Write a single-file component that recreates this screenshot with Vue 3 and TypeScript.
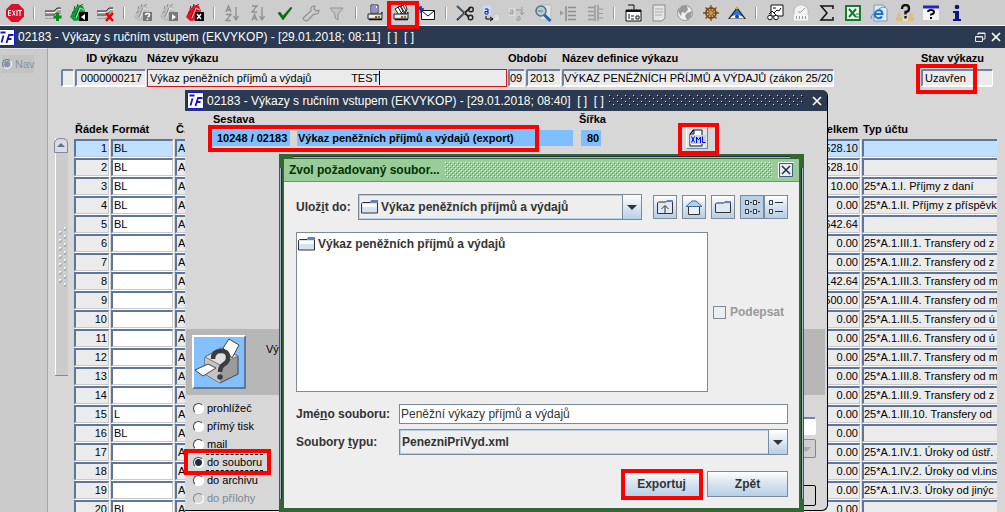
<script setup lang="ts">
import { ref } from 'vue'

interface Tool { name: string; art: string }
interface Row { no: number; format: string; total: string; kind: string }

const sheet = '<path d="M1 7h9l3-3h4v6l-3 1-4 4H1z" fill="#a3a3a3"/><path d="M1 7h9l3-3h4" fill="none" stroke="#333"/><path d="M2 8.500h9l3-3h3M1 13h8l3-2" fill="none" stroke="#f4f4f4"/><path d="M1 11h9l4-3" fill="none" stroke="#555"/>'
const file = (c: string, d: string) => `<path d="M0 13L4 5l5-4 4 1 2 5-2 9-9 1z" fill="${c}"/><path d="M4 5l1-3M7 3l1-3M10 2l3-2M2 9l3-2M5 13l4-9" fill="none" stroke="${d}"/><path d="M6 14l4-10 4 2" fill="none" stroke="#f2f2f2" stroke-width=".8"/>`
const printer = '<path d="M2 10h13l1-2v7H2z" fill="#ddd" stroke="#222"/><path d="M3 12h8" stroke="#fff"/><path d="M3 15.500h13" stroke="#111" stroke-width="1.500"/><path d="M9 13h2" stroke="#e22" stroke-width="2"/><path d="M12 13h2" stroke="#2a2" stroke-width="2"/>'

const groups: Tool[][] = [
  [{ name: 'Konec', art: '<path d="M5.500 0h7L18 5.500v7L12.500 18h-7L0 12.500v-7z" fill="#d9122b"/><path d="M5 6.500H2.500v5H5M2.500 9H5M6.500 6.500l2.500 5M9 6.500l-2.500 5M11 6v6M12 6.500h4M14 6.500v5.500" stroke="#fff" fill="none"/>' }],
  [
    { name: 'Vložit záznam', art: sheet + '<path d="M13.500 9v8M9.500 13h8" stroke="#0a8a1c" stroke-width="3"/>' },
    { name: 'Uložit', art: file('#149a3a', '#0a5c20') + '<path d="M9 8h9v9H9z" fill="#000"/><path d="M15 10v6l-4-3z" fill="#fff"/>' },
    { name: 'Smazat záznam', art: sheet + '<path d="M10 9l7 8M17 9l-7 8" stroke="#e00" stroke-width="2.500"/>' },
  ],
  [
    { name: 'Zadat dotaz', art: file('#bdbdbd', '#8a8a8a') + '<path d="M9 8h9v9H9z" fill="#777"/><path d="M11.500 11q0-1.500 2-1.500t2 1.500-2 2M13.500 14.500v1.500" stroke="#fff" fill="none" stroke-width="1.500"/>' },
    { name: 'Provést dotaz', art: file('#bdbdbd', '#8a8a8a') + '<path d="M9 8h9v9H9z" fill="#777"/><path d="M12 10v6l4-3z" fill="#fff"/>' },
    { name: 'Zrušit dotaz', art: file('#e0162c', '#7c0c18') + '<path d="M9 8h9v9H9z" fill="#000"/><path d="M11 10l4 5M15 10l-4 5" stroke="#fff" stroke-width="1.500"/>' },
  ],
  [
    { name: 'Řadit vzestupně', art: '<path d="M2 8l2.500-6L7 8M3 6h3M2 10.500h5l-5 6h5M12 3v12M9.500 12l2.500 4 2.500-4" fill="none" stroke="#8f8f8f" stroke-width="1.300"/>' },
    { name: 'Řadit sestupně', art: '<path d="M2 2h5L2 8h5M2 16.500L4.500 10.500l2.500 6M3 14.500h3M12 3v12M9.500 12l2.500 4 2.500-4" fill="none" stroke="#8f8f8f" stroke-width="1.300"/>' },
    { name: 'Potvrdit', art: '<path d="M2 9l2-1 3 4 8-9 1 1-9 12z" fill="#086a08" stroke="#086a08" stroke-width=".6"/>' },
    { name: 'Nástroje', art: '<path d="M2 16l-1-2 8-7q-1-5 4-5l-1 3 2 2 3-1q0 5-5 4l-7 7z" fill="none" stroke="#909090" stroke-width="1.200"/>' },
    { name: 'Filtr', art: '<path d="M2 4h13l-5 6v6l-3-2v-4z" fill="#c4c4c4" stroke="#929292"/>' },
  ],
  [
    { name: 'Tisk', art: '<path d="M5 1h7v8H5z" fill="#fff" stroke="#222"/><path d="M6 3h4M6 5h5M6 7h5" stroke="#22b"/>' + printer },
    { name: 'Tisk sestav', art: '<path d="M3 5l5-3 3 5-4 4zM6 3l5-2 3 6-4 3zM9 2l4-2 2 5-2 5z" fill="#fff" stroke="#222"/>' + printer },
    { name: 'Odeslat poštou', art: '<path d="M3.500 6.500h13v9h-13z" fill="#fff" stroke="#111"/><path d="M4 7l6 5 6-5" fill="none" stroke="#111"/><path d="M0 5h6M3 2v7M1 3l4 4" stroke="#0a36c8" stroke-width="1.700"/>' },
  ],
  [
    { name: 'Vyjmout', art: '<path d="M1 2l12 11M1 16L14 4" stroke="#222" stroke-width="1.800"/><path d="M1 2l8 7M2 15l7-6" stroke="#9ab" stroke-width=".7"/><circle cx="15" cy="5.500" r="2.300" fill="none" stroke="#222" stroke-width="1.400"/><circle cx="14.500" cy="13.500" r="2.300" fill="none" stroke="#222" stroke-width="1.400"/>' },
    { name: 'Kopírovat', art: '<path d="M1 2h8v9H1z" fill="#c9dcff"/><path d="M3 5h3v5H3V7.500h3" fill="none" stroke="#11c"/><path d="M4 12v3h6M8 13l3 2-3 2" fill="none" stroke="#000"/><path d="M13 12h3v4h-3v-2h3" fill="none" stroke="#eee"/>' },
    { name: 'Vložit', art: '<path d="M1 4h6v8H1z" fill="#ddd"/><path d="M2 6h3v4H2V8h3" fill="none" stroke="#999"/><path d="M8 6h6V3M14 6v5M12 8l2 3 2-3M9 13h3v3H9v-2" fill="none" stroke="#999"/>' },
    { name: 'Najít', art: '<path d="M6 1h11v15H6z" fill="#e2e2e2" stroke="#bbb"/><circle cx="7" cy="7" r="5" fill="#b8cbd4" stroke="#58707c" stroke-width="1.500"/><path d="M10.500 11l6 6" stroke="#2265b5" stroke-width="3"/><path d="M4 7h5" stroke="#2a9a5a"/>' },
    { name: 'Osnova', art: '<path d="M6 2v15M8 3.500h8M8 7.500h8M8 11.500h8M8 15.500h8" stroke="#8c8c8c" stroke-width="1.500"/><path d="M0 6.500l4 2.500-4 2.500z" fill="#999"/>' },
    { name: 'Seskupit', art: '<path d="M2 3.500h6M2 7.500h6M2 11.500h6M2 15.500h6M9 1v16M12 1v16" stroke="#999" stroke-width="1.500"/><path d="M12 5h5M12 9.500h5M12 14h5" stroke="#999"/>' },
  ],
  [
    { name: 'Formulář', art: '<path d="M2 6h15v11H2z" fill="#fff" stroke="#111"/><path d="M2 7h15" stroke="#111" stroke-width="2"/><path d="M5 10v5M7 12h3M7 15h3M12 12h3v3h-3z" fill="none" stroke="#111"/><path d="M4 1h6v7M7.500 5.500L10 8l2.500-2.500" fill="none" stroke="#111"/>' },
    { name: 'Dokument', art: '<path d="M3 1h12v13l-3 3H3z" fill="#e4e4e4" stroke="#888"/><path d="M5 5h8M5 8h8M5 11h7" stroke="#aaa"/>' },
    { name: 'Svět', art: '<circle cx="9" cy="9" r="7.500" fill="#f0f0f0" stroke="#999"/><path d="M2 6l4-4 5 0 1 4-3 3-3-1-1 4-2-3zM11 9l5-2-1 6-4 3-2-4z" fill="#9a9a9a"/>' },
    { name: 'Navigace', art: '<circle cx="9" cy="9" r="5" fill="none" stroke="#7a4a10" stroke-width="1.800"/><path d="M9 1v16M1 9h16M3.500 3.500l11 11M14.500 3.500l-11 11" stroke="#7a4a10" stroke-width="1.300"/><circle cx="9" cy="9" r="2" fill="#d79a3a"/>' },
    { name: 'Přehled', art: '<path d="M9 3L0 15h18z" fill="#1a1a1a"/><path d="M9 4.500L3 13h12z" fill="#2f74d8"/><path d="M1.500 14.500Q9 7 16.500 14.500z" fill="#fff"/><circle cx="9" cy="12.500" r="2" fill="#124cae"/><path d="M7 5l2-3 2 3z" fill="#d4b233"/>' },
  ],
  [
    { name: 'Prezentace', art: '<path d="M5 1h12v11H5z" fill="#fff" stroke="#111"/><path d="M7 4h3M8 9l3-3 2 1 2-3" fill="none" stroke="#111"/><path d="M3 10l3-3 4 4" fill="none" stroke="#111"/><circle cx="4" cy="13.500" r="2.300" fill="#fff" stroke="#111"/><circle cx="10" cy="13.500" r="2.300" fill="#fff" stroke="#111"/>' },
    { name: 'Kalendář', art: '<circle cx="9" cy="8" r="7.300" fill="#f2f2f2" stroke="#bbb"/><path d="M9 8l4-4M6 8h3" stroke="#999"/><path d="M2 10.500h14v6H2z" fill="#f5f5f5"/><path d="M4 13.500h11" stroke="#999" stroke-width="3" stroke-dasharray="1 2"/>' },
    { name: 'Součet', art: '<path d="M15 5V2H3l6 7-6 7h12v-3" fill="none" stroke="#111" stroke-width="1.500"/>' },
    { name: 'Excel', art: '<path d="M2 2h14v14H2z" fill="#eef5ee" stroke="#187a2c" stroke-width="2"/><path d="M5 5l7 8M12 5l-7 8" stroke="#187a2c" stroke-width="2"/><path d="M12 10h4M12 13h4" stroke="#187a2c"/>' },
    { name: 'Prohlížeč', art: '<path d="M4 1h9l4 4v12H4z" fill="#dfeaf5" stroke="#7b98bd"/><path d="M12 12.500q-2.500 3-5.500 1t-1-5.500q2-2.500 5-1.500 2 1 2 3.500H5.500" fill="none" stroke="#1b72c8" stroke-width="2"/><path d="M1 15Q0 12 7 6.500T15 4" fill="none" stroke="#3f95dd"/>' },
    { name: 'Poradce', art: '<circle cx="3" cy="11" r="2" fill="#e0bd7c"/><path d="M0 13h6v4H0zM12 13h6v4h-6z" fill="#e0bd7c"/><circle cx="15" cy="11" r="2" fill="#e0bd7c"/><path d="M7 13h5v4H7z" fill="#f0dfae"/><path d="M6 5q0-4 3.500-4T13 4.500 9.500 8v2.500M9.500 12v2.500" fill="none" stroke="#111" stroke-width="2.300"/>' },
    { name: 'Nápověda', art: '<path d="M1 2h16v14H1z" fill="#f5f5f5"/><path d="M1 3h16" stroke="#2222c8" stroke-width="3"/><path d="M6 8q0-2 3-2t3 2-3 2.500v1M9 13v2" fill="none" stroke="#111" stroke-width="2"/>' },
    { name: 'Informace', art: '<circle cx="9" cy="3" r="2.300" fill="#0a1680"/><path d="M5 7h6v8h2v2H5v-2h2V9H5z" fill="#0a1680"/>' },
  ],
]

const rows = ref<Row[]>([
  { no: 1, format: 'BL', total: '528.10', kind: '' },
  { no: 2, format: 'BL', total: '528.10', kind: '' },
  { no: 3, format: 'BL', total: '10.00', kind: '25*A.1.I. Příjmy z daní' },
  { no: 4, format: 'BL', total: '0.00', kind: '25*A.1.II. Příjmy z příspěvk' },
  { no: 5, format: 'BL', total: '642.64', kind: '' },
  { no: 6, format: '', total: '0.00', kind: '25*A.1.III.1. Transfery od z' },
  { no: 7, format: '', total: '0.00', kind: '25*A.1.III.2. Transfery od z' },
  { no: 8, format: '', total: '142.64', kind: '25*A.1.III.3. Transfery od m' },
  { no: 9, format: '', total: '500.00', kind: '25*A.1.III.4. Transfery od m' },
  { no: 10, format: '', total: '0.00', kind: '25*A.1.III.5. Transfery od ú' },
  { no: 11, format: '', total: '0.00', kind: '25*A.1.III.6. Transfery od ú' },
  { no: 12, format: '', total: '0.00', kind: '25*A.1.III.7. Transfery od m' },
  { no: 13, format: '', total: '0.00', kind: '25*A.1.III.8. Transfery od m' },
  { no: 14, format: '', total: '0.00', kind: '25*A.1.III.9. Transfery od z' },
  { no: 15, format: 'L', total: '0.00', kind: '25*A.1.III.10. Transfery od' },
  { no: 16, format: 'BL', total: '0.00', kind: '' },
  { no: 17, format: '', total: '0.00', kind: '25*A.1.IV.1. Úroky od ústř.' },
  { no: 18, format: '', total: '0.00', kind: '25*A.1.IV.2. Úroky od vl.ins' },
  { no: 19, format: '', total: '0.00', kind: '25*A.1.IV.3. Úroky od jinýc' },
  { no: 20, format: 'BL', total: '0.00', kind: '' },
])

const outputs = ['prohlížeč', 'přímý tisk', 'mail', 'do souboru', 'do archivu', 'do přílohy']
const output = ref('do souboru')
const reportName = ref('Výkaz peněžních příjmů a výdajů' + '\u00a0'.repeat(13) + 'TEST')
const fileName = ref('Peněžní výkazy příjmů a výdajů')
const folder = 'Výkaz peněžních příjmů a výdajů'
</script>

<template>
  <div class="app">
    <div class="toolbar" role="toolbar" aria-label="Nástroje">
      <template v-for="(group, g) in groups" :key="g">
        <span v-if="g" class="sep"></span>
        <button v-for="tool in group" :key="tool.name" type="button" class="tool" :aria-label="tool.name">
          <svg width="18" height="18" viewBox="0 0 18 18" v-html="tool.art"></svg>
          <span v-if="tool.name === 'Tisk sestav'" class="mark mark-tool"></span>
        </button>
      </template>
    </div>

    <header class="titlebar">
      <svg class="logo" width="17" height="17" viewBox="0 0 17 17"><path d="M.5.500h16v16H.5z" fill="#fff" stroke="#1616e0"/><path d="M2.500 3.500h5M5.500 6.500l-2 7M8.500 14l2.500-8h4.500M9.500 10h4" fill="none" stroke="#1616c8" stroke-width="1.800"/></svg>
      <h1>02183 - Výkazy s ručním vstupem (EKVYKOP) - [29.01.2018; 08:11]&nbsp; [ ]&nbsp; [ ]</h1>
      <button type="button" class="winbtn" aria-label="Obnovit"><svg width="11" height="11" viewBox="0 0 11 11"><path d="M3 3V1h7v6H8M3 1.500h7M.5 4.500h7v5h-7zM.5 5h7" fill="none" stroke="#e6e8ec"/></svg></button>
      <button type="button" class="winbtn" aria-label="Zavřít"><svg width="10" height="10" viewBox="0 0 10 10"><path d="M1 1l8 8M9 1L1 9" stroke="#fff" stroke-width="1.700"/></svg></button>
    </header>

    <div class="workspace">
      <aside class="nav"><label><input type="radio" disabled />Nav</label></aside>
      <main class="form">
        <div class="fields">
          <input class="field tick" aria-label="Výběr" />
          <label class="cell"><span class="cap right">ID výkazu</span><input class="field right" value="0000000217" /></label>
          <label class="cell"><span class="cap">Název výkazu</span><input v-model="reportName" class="field active" /><i class="caret"></i></label>
          <label class="cell"><span class="cap">Období</span><input class="field tight" value="09" /></label>
          <input class="field low" aria-label="Rok" value="2013" />
          <label class="cell"><span class="cap">Název definice výkazu</span><input class="field tight" value="VÝKAZ PENĚŽNÍCH PŘÍJMŮ A VÝDAJŮ (zákon 25/20" /></label>
          <label class="cell state"><span class="cap">Stav výkazu</span><input class="field" value="Uzavřen" /><i class="mark mark-state"></i></label>
        </div>

        <div class="records">
          <div class="scroll">
            <button type="button" aria-label="Nahoru"><svg width="14" height="15" viewBox="0 0 14 15"><path d="M.5 14.500V5Q1 .5 7 .5T13.500 5v9.500z" fill="#dcdcdc" stroke="#7b8ba6"/><path d="M7 5l4 4H3z" fill="#5c7295"/></svg></button>
            <svg class="grip" width="10" height="60" viewBox="0 0 10 60"><defs><pattern id="grip" width="10" height="8" patternUnits="userSpaceOnUse"><path d="M6 0h2v2H6zM1 4h2v2H1z" fill="#fff"/><path d="M8 1v2H6M3 5v2H1" fill="none" stroke="#8d9bb4"/></pattern></defs><rect width="10" height="60" fill="url(#grip)"/></svg>
          </div>
          <div class="clip">
            <table>
              <colgroup><col class="c-no" /><col class="c-fmt" /><col /><col class="c-sum" /><col class="c-kind" /></colgroup>
              <thead><tr><th>Řádek</th><th>Formát</th><th>Č.p</th><th class="right">Celkem</th><th>Typ účtu</th></tr></thead>
              <tbody>
                <tr v-for="row in rows" :key="row.no" :class="{ current: row.no === 1 }">
                  <td class="right">{{ row.no }}</td>
                  <td class="edit"><input v-model="row.format" :aria-label="'Formát ' + row.no" /></td>
                  <td>A</td>
                  <td class="right">{{ row.total }}</td>
                  <td>{{ row.kind }}</td>
                </tr>
              </tbody>
            </table>
          </div>
        </div>
      </main>
    </div>

    <section class="window" aria-label="Výstup sestavy">
      <header class="titlebar inner">
        <svg class="logo" width="17" height="17" viewBox="0 0 17 17"><path d="M.5.500h16v16H.5z" fill="#fff" stroke="#1616e0"/><path d="M2.500 3.500h5M5.500 6.500l-2 7M8.500 14l2.500-8h4.500M9.500 10h4" fill="none" stroke="#1616c8" stroke-width="1.800"/></svg>
        <h2>02183 - Výkazy s ručním vstupem (EKVYKOP) - [29.01.2018; 08:40]&nbsp; [ ]&nbsp; [ ]</h2>
        <svg class="dots" height="11"><defs><pattern id="dots" width="8" height="6" patternUnits="userSpaceOnUse"><path d="M1 0h1v1H1zM5 3h1v1H5z" fill="#dfe4ea"/><path d="M2 1h1v1H2zM6 4h1v1H6z" fill="#05090f"/></pattern></defs><rect width="100%" height="11" fill="url(#dots)"/></svg>
        <button type="button" class="winbtn" aria-label="Zavřít okno"><svg width="10" height="10" viewBox="0 0 10 10"><path d="M1 1l8 8M9 1L1 9" stroke="#fff" stroke-width="1.700"/></svg></button>
      </header>
      <div class="report">
        <div class="cell"><span class="cap">Sestava</span><output class="blue">10248 / 02183</output></div>
        <output class="blue title">Výkaz peněžních příjmů a výdajů (export)</output>
        <div class="cell"><span class="cap">Šířka</span><output class="blue num">80</output></div>
        <button type="button" class="xml" aria-label="XML">
          <svg width="20" height="18" viewBox="0 0 20 18"><path d="M6 1h9v16H3V5z" fill="#fff" stroke="#111"/><path d="M3 5h4V1z" fill="#a9b6cf" stroke="#111"/><path d="M3 6h16v9H3z" fill="#b9d4ff"/><path d="M4.500 7.500l3 6M7.500 7.500l-3 6M9.500 14V8l2 3 2-3v6M15.500 7.500v6h3" fill="none" stroke="#0a0ad8"/></svg>
          <span class="mark mark-xml"></span>
        </button>
        <span class="mark mark-report"></span>
      </div>
      <div class="band">
        <button type="button" class="bigprint" aria-label="Tisknout">
          <svg width="50" height="50" viewBox="0 0 50 50"><path d="M11 20l16-9 17 8v18L26 46 11 37z" fill="#9b9b9b" stroke="#444"/><path d="M11 20l15 8v18L11 37z" fill="#c4c4c4"/><path d="M11 20l16-9 17 8-18 9z" fill="#e0e0e0" stroke="#777"/><path d="M29 11l6-9 10 6-7 13z" fill="#fff" stroke="#444"/><path d="M1 33l13-6 8 4-13 8z" fill="#fff" stroke="#444"/><path d="M19 22q0-8 8-8t7 8q-1 4-5 6-3 2-3 7" fill="none" stroke="#3a3d40" stroke-width="4.500"/><circle cx="26" cy="40" r="2.800" fill="#3a3d40"/></svg>
        </button>
        <span class="note">Vý</span>
      </div>
      <div class="options">
        <div class="radios" role="radiogroup" aria-label="Výstup">
          <label v-for="name in outputs" :key="name" :class="{ chosen: name === output, off: name === 'do přílohy' }">
            <input v-model="output" type="radio" name="output" :value="name" :disabled="name === 'do přílohy'" /><span>{{ name }}</span>
            <i v-if="name === 'do souboru'" class="mark mark-radio"></i>
          </label>
        </div>
        <div class="side">
          <input class="field white" aria-label="Cíl" />
          <div class="combo dim"><select disabled aria-label="Formát výstupu"></select><span class="arrow"></span></div>
          <button type="button" class="run" aria-label="Spustit"></button>
        </div>
      </div>
    </section>

    <section class="dialog" role="dialog" aria-labelledby="dlg">
      <div class="dhead">
        <h2 id="dlg">Zvol požadovaný soubor...</h2>
        <svg class="dots" height="16"><defs><pattern id="bumps" width="4" height="4" patternUnits="userSpaceOnUse"><path d="M0 0h1v1H0zM2 2h1v1H2z" fill="#fff"/><path d="M1 1h1v1H1zM3 3h1v1H3z" fill="#5f86a8"/></pattern></defs><rect width="100%" height="16" fill="url(#bumps)"/></svg>
        <button type="button" aria-label="Zavřít dialog"><svg width="16" height="16" viewBox="0 0 16 16"><path d="M1.500 1.500h13v13h-13z" fill="#e8edf5" stroke="#3d5a80"/><path d="M.5 16V.5H16" fill="none" stroke="#fff"/><path d="M4 4l8 8M12 4l-8 8" stroke="#1e2b40" stroke-width="1.500"/></svg></button>
      </div>
      <div class="dbody">
        <div class="place">
          <label for="place">Ulož<u>i</u>t do:</label>
          <div class="combo">
            <svg class="folder" width="17" height="14" viewBox="0 0 17 14"><path d="M.5 13V3.500l1-1H9l1-1h6.500V13z" fill="#d5e2f0" stroke="#333"/><path d="M10 0h7v3h-8z" fill="#6382bf"/><path d="M1.500 4h14v3h-14z" fill="#fff"/></svg>
            <select id="place"><option>{{ folder }}</option></select><span class="arrow"></span>
          </div>
          <button type="button" class="sq" aria-label="O úroveň výš"><svg width="18" height="18" viewBox="0 0 18 18"><path d="M1.500 15.500V5l1-1H10l1-1h5.500v12.500z" fill="#dfe9f4" stroke="#333"/><path d="M11 2h6v2h-7z" fill="#6382bf"/><path d="M9 15V8M5.500 11L9 7.500l3.500 3.500" fill="none" stroke="#333"/></svg></button>
          <button type="button" class="sq" aria-label="Domů"><svg width="18" height="18" viewBox="0 0 18 18"><path d="M3.500 8v8.500h11V8" fill="#e8f0f8" stroke="#333"/><path d="M1 8.500L7 3h4l6 5.500z" fill="#b8cfe5" stroke="#3e6f8e"/></svg></button>
          <button type="button" class="sq" aria-label="Nová složka"><svg width="18" height="18" viewBox="0 0 18 18"><path d="M1.500 14.500V6l1-1H10l1-1h5.500v10.500z" fill="#dfe9f4" stroke="#333"/><path d="M11 3h6v2h-7z" fill="#6382bf"/></svg></button>
          <div class="pair">
            <button type="button" class="sq on" aria-label="Seznam"><svg width="18" height="18" viewBox="0 0 18 18"><path d="M2.500 2.500h3v4h-3zM10.500 2.500h3v4h-3zM2.500 11.500h3v4h-3zM10.500 11.500h3v4h-3z" fill="#eef4fa" stroke="#333"/><path d="M7 4.500h2M15 4.500h2M7 13.500h2M15 13.500h2" stroke="#333"/></svg></button>
            <button type="button" class="sq" aria-label="Podrobnosti"><svg width="18" height="18" viewBox="0 0 18 18"><path d="M2.500 2.500h3v4h-3zM2.500 11.500h3v4h-3z" fill="#eef4fa" stroke="#333"/><path d="M8 4.500h8M8 13.500h8" stroke="#333"/></svg></button>
          </div>
        </div>
        <div class="middle">
          <ul class="files" role="listbox" aria-label="Soubory">
            <li role="option" aria-selected="false"><svg width="17" height="14" viewBox="0 0 17 14"><path d="M.5 13V3.500l1-1H9l1-1h6.500V13z" fill="#d5e2f0" stroke="#333"/><path d="M10 0h7v3h-8z" fill="#6382bf"/><path d="M1.500 4h14v3h-14z" fill="#fff"/></svg>{{ folder }}</li>
          </ul>
          <label class="sign"><input type="checkbox" disabled />Podepsat</label>
        </div>
        <div class="names">
          <label for="fname">Jmé<u>n</u>o souboru:</label>
          <input id="fname" v-model="fileName" class="text" />
          <label for="ftype">Soubory <u>t</u>ypu:</label>
          <div class="combo"><select id="ftype"><option>PenezniPriVyd.xml</option></select><span class="arrow"></span></div>
        </div>
        <div class="actions">
          <button type="button" class="push">Exportuj<span class="mark mark-export"></span></button>
          <button type="button" class="push">Zpět</button>
        </div>
      </div>
    </section>
  </div>
</template>

<style>
body { margin: 0; }
</style>

<style scoped>
* { box-sizing: border-box; }
.app { position: relative; display: flex; flex-direction: column; height: 100vh; overflow: hidden; background: #d7d7d7; color: #000; font: 11px/14px "Liberation Sans", Arial, sans-serif; }
button, input, select { margin: 0; padding: 0; font: inherit; color: inherit; border-radius: 0; }
button { border: 0; background: none; display: flex; align-items: center; justify-content: center; }
svg { display: block; flex: none; }
h1, h2 { margin: 0; font-size: 12px; font-weight: normal; white-space: nowrap; }
.right { text-align: right; }
.mark { position: absolute; border: 4px solid #f00; pointer-events: none; z-index: 5; }

.toolbar { flex: none; display: flex; align-items: center; height: 26px; padding: 0 2px; background: #cdcdcd; border-bottom: 1px solid #f2f2f2; }
.tool { position: relative; width: 26px; height: 24px; }
.sep { width: 12px; height: 12px; background: linear-gradient(90deg, transparent 5px, #8797b5 5px, #8797b5 6px, #fff 6px, #fff 7px, transparent 7px); }
.mark-tool { left: -1px; top: 0; width: 32px; height: 28px; }

.titlebar { flex: none; display: flex; align-items: center; height: 22px; padding: 0 1px 0 0; background: #2b3a50; color: #fff; }
.titlebar .logo { margin-right: 3px; margin-left: -2px; }
.titlebar h1 { flex: 1; }
.winbtn { width: 16px; height: 16px; }

.workspace { flex: 1; min-height: 0; display: flex; }
.nav { flex: none; width: 48px; padding: 6px 0 0 2px; background: #cbcbcb; border-right: 1px solid #9aa6bb; border-top: 1px solid #e4e4e4; }
.nav label { display: flex; align-items: center; gap: 3px; width: 32px; height: 18px; background: #c3c3c3; color: #8593a9; }
input[type="radio"] { appearance: none; flex: none; width: 11px; height: 11px; border: 1px solid #34465f; border-right-color: #fff; border-bottom-color: #fff; border-radius: 50%; background: #fff; }
.nav input[type="radio"] { border: 1px solid; border-color: #6f8099 #fff #fff #6f8099; background: #8593a9; width: 10px; height: 10px; box-shadow: inset 0 0 0 1px #c3c3c3; }

.form { flex: 1; min-width: 0; overflow: hidden; padding: 3px 8px 0 6px; }
.fields { display: grid; grid-template-columns: 13px 71px 360px 17px 35px 272px minmax(72px, 1fr); column-gap: 1px; align-items: end; padding: 0 4px 0 7px; }
.cell { position: relative; display: block; }
.cap { display: block; height: 18px; line-height: 14px; font-weight: bold; white-space: nowrap; }
.cap.right { padding-right: 9px; }
.field { display: block; width: 100%; height: 18px; padding: 0 2px; border: 2px solid; border-color: #7083a3 #fff #fff #7083a3; border-right-width: 1px; border-radius: 2px; background: #ebebeb; }
.field.tight { padding: 0; }
.field.right { padding-right: 3px; }
.field.active { border: 1px solid #d01818; padding-left: 2px; border-radius: 0; }
.field.white { background: #fff; }
.state { justify-self: end; width: 72px; }
.caret { position: absolute; left: 232px; bottom: 2px; width: 1px; height: 14px; background: #000; }
.mark-state { left: -5px; top: 13px; width: 61px; height: 30px; }

.records { display: flex; align-items: flex-start; margin-top: 34px; }
.scroll { flex: none; width: 18px; margin-top: 17px; }
.scroll { position: relative; height: 238px; background: linear-gradient(90deg, transparent 1px, #fff 1px, #fff 2px, #cbcbcb 2px, #cbcbcb 14px, transparent 14px); }
.scroll::after { content: ""; position: absolute; left: 1px; bottom: 0; width: 13px; height: 1px; background: #7b8ba6; }
.grip { margin: 74px 0 0 4px; }
.clip { flex: 1; min-width: 0; overflow: hidden; }
table { table-layout: fixed; width: calc(100% + 2px); border-collapse: separate; border-spacing: 2px 1px; }
.c-no { width: 35px; }
.c-fmt { width: 62px; }
.c-sum { width: 98px; }
.c-kind { width: 135px; }
th { height: 16px; padding: 0 0 2px 1px; font-size: 11px; line-height: 14px; text-align: left; white-space: nowrap; }
th.right { text-align: right; padding-right: 2px; }
td { height: 18px; padding: 0 1px; border: 1px solid; border-color: #60759a #c9c9c9 #c9c9c9 #60759a; border-left-width: 2px; border-top-width: 2px; background: #ebebeb; box-shadow: 1px 1px 0 #fff; line-height: 15px; white-space: nowrap; overflow: hidden; }
td:last-child { padding: 0; border-right: 0; }
td input { display: block; width: 100%; height: 15px; border: 0; background: transparent; }
td.edit { background: #fff; }
.current td, .current td.edit { background: #bfe0ff; }

.window { position: absolute; left: 185px; top: 90px; width: 643px; height: 421px; display: flex; flex-direction: column; background: #d7d7d7; border-right: 1px solid #000; border-bottom: 1px solid #000; border-radius: 0 6px 6px 0; }
.titlebar.inner { height: 21px; padding: 0 2px; border-top-right-radius: 5px; }
.inner .logo { margin-left: 0; }
.dots { flex: 1; width: 0; min-width: 0; margin: 0 6px 0 4px; }
.report { position: relative; display: flex; align-items: flex-end; height: 35px; margin-bottom: 183px; padding-left: 27px; }
.blue { display: block; height: 16px; padding-left: 5px; background: #80bfff; font-weight: bold; line-height: 16px; white-space: nowrap; width: 78px; }
.report .cap { height: 17px; padding-left: 1px; line-height: 12px; }
.blue.title { width: 276px; margin: 0 8px 0 7px; padding-left: 1px; }
.blue.num { width: 20px; padding-left: 6px; }
.report .cell:nth-of-type(2) .cap { margin-left: -3px; }
.xml { position: relative; width: 22px; height: 22px; margin: 0 0 -3px 80px; border: 1px solid; border-color: #fff #7083a3 #7083a3 #fff; background: #e4e4e4; }
.mark-xml { left: -9px; top: -5px; width: 41px; height: 32px; }
.mark-report { left: 23px; top: 14px; width: 331px; height: 27px; }
.band { display: flex; align-items: flex-start; gap: 20px; height: 66px; margin: 0 2px 0 1px; padding: 6px; background: #b7b7b7; }
.bigprint { width: 54px; height: 54px; border: 2px solid; border-color: #fff #5f759b #5f759b #fff; background: #84c0fb; }
.note { padding-top: 7px; }
.options { flex: 1; display: flex; justify-content: space-between; padding: 4px 11px 0 8px; }
.radios label { position: relative; display: flex; align-items: center; gap: 2px; height: 18px; }
.radios span { padding: 0 1px; line-height: 15px; white-space: nowrap; }
.radios input:checked { background: radial-gradient(circle, #1e2b40 0 3px, #fff 4px); }
.chosen span { border-top: 1px dashed #000; border-bottom: 1px dashed #000; }
.off { color: #7b8798; }
.off input { background: #d7d7d7; border-color: #7b8798 #fff #fff #7b8798; }
.mark-radio { left: -9px; top: -4px; width: 87px; height: 26px; }
.side { width: 60px; padding-top: 18px; }
.side .combo { margin: 4px 0 27px; height: 19px; }
.side .run { width: 60px; height: 21px; border: 1px solid #000; border-radius: 2px; }

.dialog { position: absolute; left: 279px; top: 154px; width: 525px; height: 359px; border: 5px solid #336633; background: #eee; color: #333; font-size: 12px; font-weight: bold; }
.dialog::before { content: ""; position: absolute; left: -3px; right: -3px; top: 9px; bottom: 9px; border: 1px solid #1c2b3c; border-width: 0 1px; box-shadow: 1px 0 #a3b8cc, -1px 0 #a3b8cc; pointer-events: none; }
.dialog::after { content: ""; position: absolute; top: -3px; left: 9px; right: 9px; height: 2px; background: linear-gradient(#1c2b3c 1px, #a3b8cc 1px); }
.dhead { display: flex; align-items: center; height: 23px; padding: 0 5px; background: #9c9; border-bottom: 1px solid #696; color: #030; }
.dhead h2 { font-weight: bold; }
.dhead .dots { margin: 0 6px 0 5px; }
.dbody { padding: 12px 11px 0 12px; }
.place { display: flex; align-items: center; }
.place > label { width: 62px; }
.combo { position: relative; height: 26px; }
.combo select { appearance: none; display: block; width: 100%; height: 100%; padding: 0 20px 0 2px; border: 1px solid #7a8a99; background: #eee; box-shadow: inset 0 0 0 1px #b8cfe5; border-radius: 0; outline: 0; }
.place .combo { width: 284px; margin-right: 11px; }
.place .combo select { padding-left: 22px; }
.folder { position: absolute; left: 3px; top: 6px; }
.arrow { position: absolute; right: 0; top: 0; width: 20px; height: 100%; border: 1px solid #7a8a99; background: linear-gradient(#fff, #b8cfe5); pointer-events: none; }
.arrow::after { content: ""; position: absolute; left: 4px; top: calc(50% - 2px); border: 5px solid transparent; border-top-color: #333; border-bottom: 0; }
.dim select, .dim .arrow { background: #cfcfcf; border-radius: 2px; }
.dim .arrow::after { border-top-color: #aaa; }
.sq { width: 24px; height: 24px; margin-right: 5px; border: 1px solid #7a8a99; background: linear-gradient(#fff, #dce7f1 40%, #b8cfe5); }
.sq.on { background: #b8cfe5; }
.pair { display: flex; }
.pair .sq { margin: 0; }
.middle { display: flex; align-items: center; gap: 5px; margin-top: 12px; }
.files { width: 412px; height: 160px; margin: 0; padding: 3px 1px; list-style: none; background: #fff; border: 1px solid #7a8a99; }
.files li { display: flex; align-items: center; gap: 3px; height: 16px; }
.sign { display: flex; align-items: center; gap: 4px; color: #999; }
.sign input { appearance: none; width: 13px; height: 13px; border: 1px solid #7a8a99; }
.names { display: grid; grid-template-columns: 103px 1fr; row-gap: 5px; align-items: center; margin-top: 12px; }
.text { height: 20px; padding: 0 1px; border: 1px solid #7a8a99; background: #fff; font-weight: normal; outline: 0; }
.actions { display: flex; justify-content: flex-end; gap: 5px; margin-top: 16px; }
.push { position: relative; width: 81px; height: 26px; border: 1px solid #7a8a99; background: linear-gradient(#fff, #dce7f1 40%, #b8cfe5); }
.mark-export { left: -1px; top: -3px; width: 82px; height: 31px; }
</style>
